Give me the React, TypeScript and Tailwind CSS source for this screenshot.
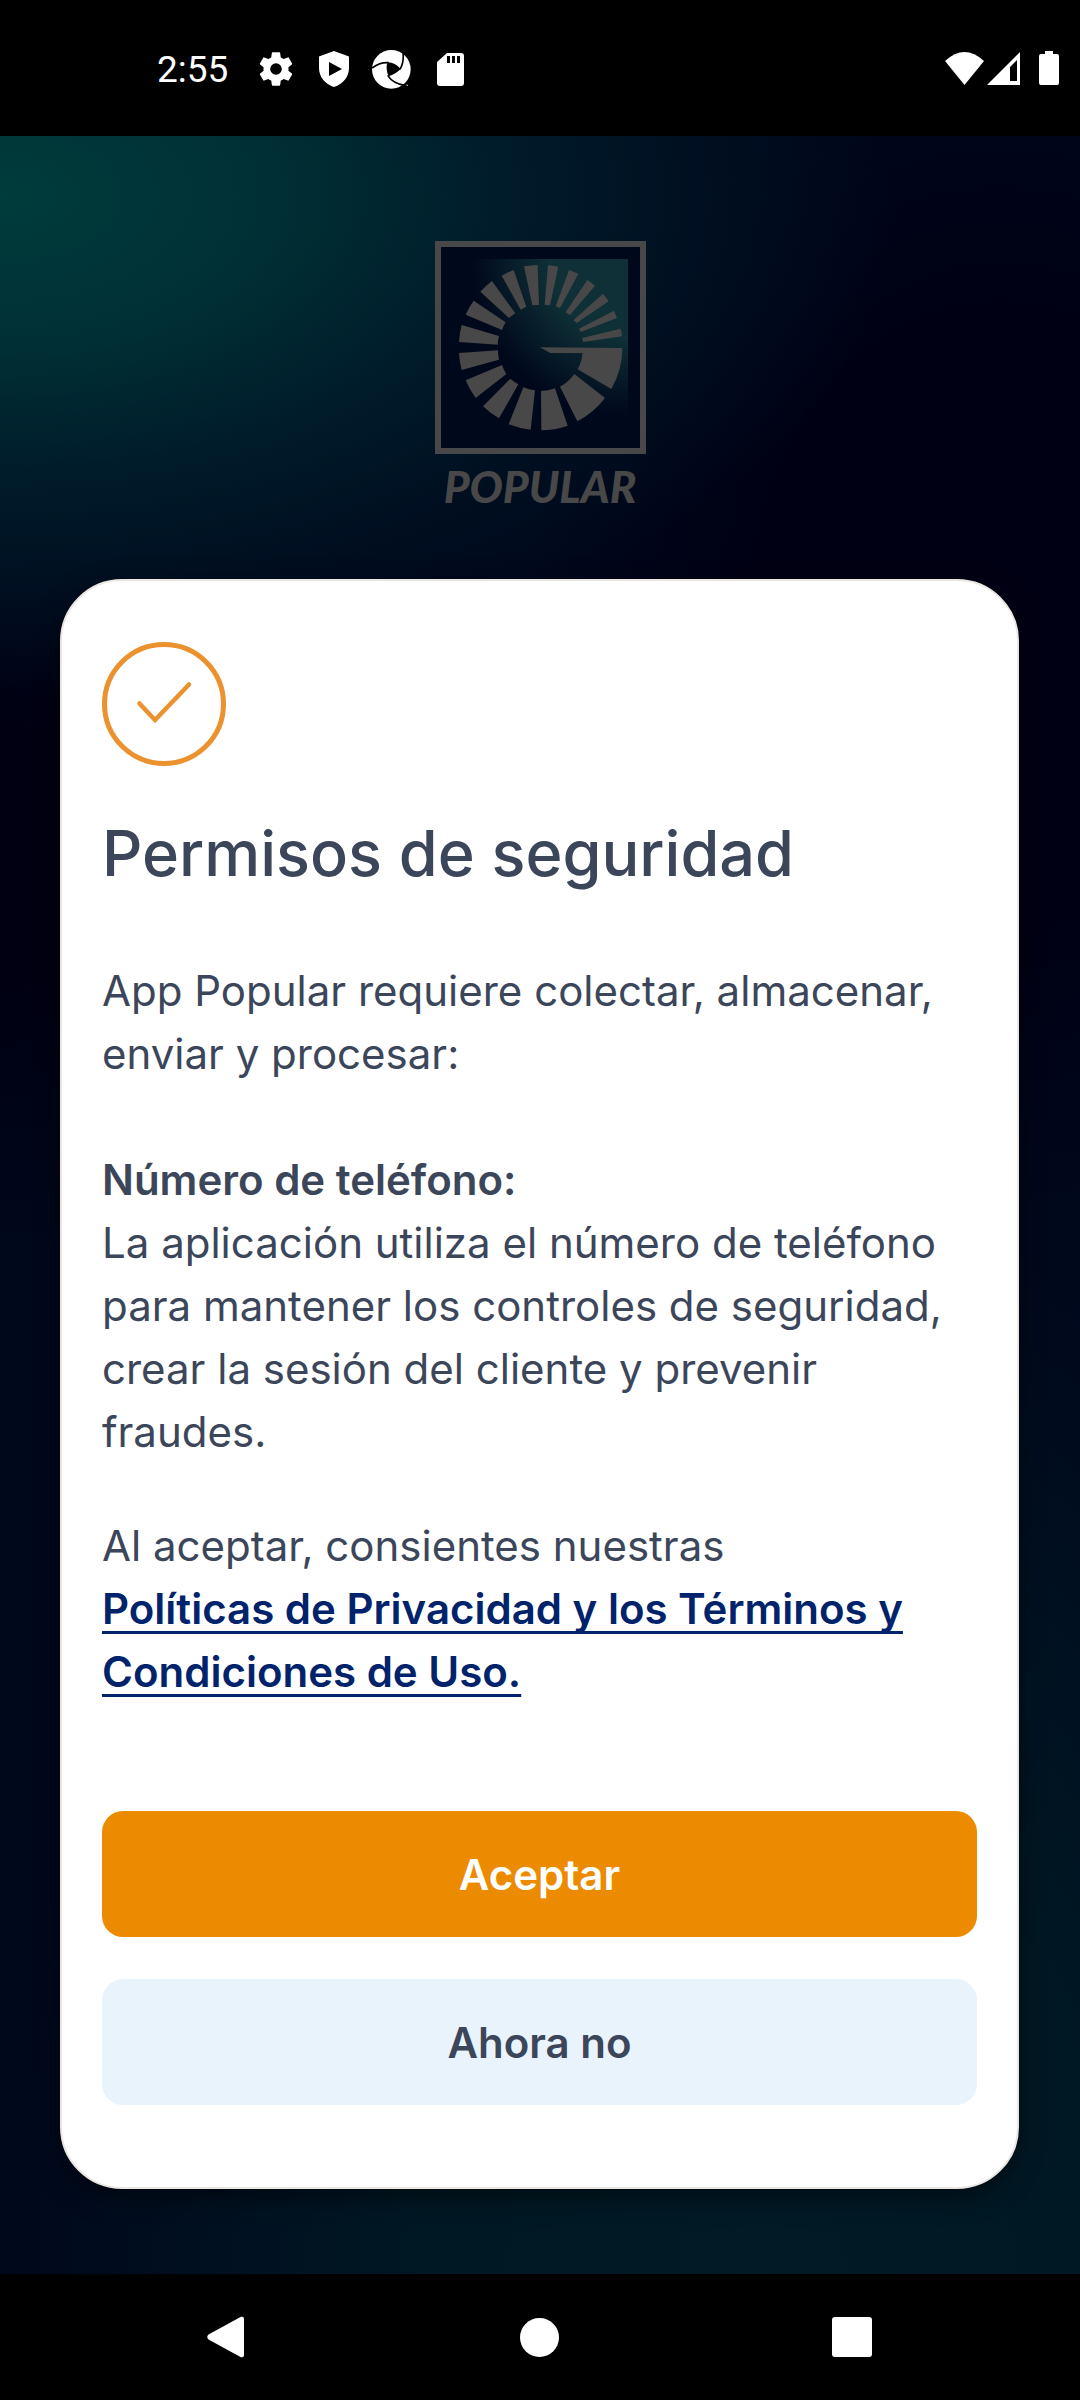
import React from "react";

const RAYS = [
  "M312 124A247 247 0 0 1 353 120L357 240A127 127 0 0 0 337 241Z",
  "M384 121A247 247 0 0 1 415 125L390 241A127 127 0 0 0 374 239Z",
  "M447 135A247 247 0 0 1 475 147L420 249A127 127 0 0 0 407 244Z",
  "M502 165A247 247 0 0 1 525 182L450 270A127 127 0 0 0 437 262Z",
  "M549 206A247 247 0 0 1 566 229L470 294A127 127 0 0 0 460 286Z",
  "M582 257A247 247 0 0 1 591 279L482 321A127 127 0 0 0 477 311Z",
  "M602 311A247 247 0 0 1 606 334L489 351A127 127 0 0 0 487 339Z",
  "M360 367L607 369A247 247 0 0 1 574 492L473 433A127 127 0 0 0 488 384L391 384Z",
  "M555 519A247 247 0 0 1 472 589L420 485A127 127 0 0 0 463 447Z",
  "M443 602A247 247 0 0 1 364 616L363 498A127 127 0 0 0 405 490Z",
  "M332 614A247 247 0 0 1 266 598L310 487A127 127 0 0 0 345 496Z",
  "M237 580A247 247 0 0 1 189 544L271 461A127 127 0 0 0 295 478Z",
  "M167 519A247 247 0 0 1 137 466L246 420A127 127 0 0 0 259 447Z",
  "M125 435A247 247 0 0 1 117 384L234 376A127 127 0 0 0 237 404Z",
  "M117 351A247 247 0 0 1 125 300L237 333A127 127 0 0 0 233 359Z",
  "M137 269A247 247 0 0 1 161 227L257 292A127 127 0 0 0 246 315Z",
  "M181 200A247 247 0 0 1 216 168L286 265A127 127 0 0 0 267 279Z",
  "M245 152A247 247 0 0 1 281 135L319 245A127 127 0 0 0 302 254Z",
];

function StatusBar() {
  return (
    <header className="flex h-[136px] shrink-0 items-center justify-between bg-black pr-[21px] pl-[157px] text-white">
      <div className="flex items-center gap-[23px] pt-0.5">
        <span className="mr-[5px] font-[Roboto] text-[37px] leading-none">2:55</span>
        <svg className="size-10" viewBox="0 0 24 24" fill="currentColor" aria-hidden="true">
          <path d="M19.43 12.98c.04-.32.07-.64.07-.98s-.03-.66-.07-.98l2.11-1.65c.19-.15.24-.42.12-.64l-2-3.46c-.12-.22-.39-.3-.61-.22l-2.49 1c-.52-.4-1.08-.73-1.69-.98l-.38-2.65A.49.49 0 0 0 14 2h-4c-.25 0-.46.18-.49.42l-.38 2.65c-.61.25-1.17.59-1.69.98l-2.49-1c-.23-.09-.49 0-.61.22l-2 3.46c-.13.22-.07.49.12.64l2.11 1.65c-.04.32-.07.65-.07.98s.03.66.07.98l-2.11 1.65c-.19.15-.24.42-.12.64l2 3.46c.12.22.39.3.61.22l2.49-1c.52.4 1.08.73 1.69.98l.38 2.65c.03.24.24.42.49.42h4c.25 0 .46-.18.49-.42l.38-2.65c.61-.25 1.17-.59 1.69-.98l2.49 1c.23.09.49 0 .61-.22l2-3.46c.12-.22.07-.49-.12-.64zM12 15.500a3.500 3.500 0 1 1 0-7 3.500 3.500 0 0 1 0 7z" />
        </svg>
        <svg className="h-9 w-[30px]" viewBox="0 0 30 36" fill="currentColor" aria-hidden="true">
          <path fillRule="evenodd" d="M15 0 30 5.500V17c0 9-6 16-15 19C6 33 0 26 0 17V5.500ZM10 11v14l13-7Z" />
        </svg>
        <svg className="size-[39px]" viewBox="0 0 117 117" aria-hidden="true">
          <circle cx="58" cy="58" r="58" fill="#fff" />
          <path fill="#000" d="M46 37Q68 36 86 57Q70 73 50 79Q40 58 46 37Z" />
          <path
            fill="none"
            stroke="#000"
            strokeWidth="5"
            d="M0 54Q24 36 50 38M92 2Q98 34 84 58M47 76Q62 100 100 107"
          />
          <path fill="#000" d="M80 117 100 106 117 104V117Z" />
          <path fill="#fff" d="M102 104h7l-3 4z" />
        </svg>
        <svg className="h-[33px] w-[33px]" viewBox="0 0 27 33" fill="currentColor" aria-hidden="true">
          <path fillRule="evenodd" d="M10 0H24a3 3 0 0 1 3 3V30a3 3 0 0 1-3 3H3a3 3 0 0 1-3-3V9ZM10 3v7h3V3Zm5 0v7h3V3Zm5 0v7h3V3Z" />
        </svg>
      </div>
      <div className="flex items-center">
        <svg className="h-[33px] w-[39px]" viewBox="0 0 39 33" fill="currentColor" aria-hidden="true">
          <path d="M0 9Q19.500-9 39 9L19.500 33Z" />
        </svg>
        <svg className="ml-[3px] h-[33px] w-[33px]" viewBox="0 0 33 33" fill="currentColor" aria-hidden="true">
          <path fillRule="evenodd" d="M33 0V33H0ZM30 8 23 15V29H30Z" />
        </svg>
        <svg className="ml-[19px] h-[34px] w-5" viewBox="0 0 20 34" fill="currentColor" aria-hidden="true">
          <path d="M6 0h8v3h4a2 2 0 0 1 2 2v27a2 2 0 0 1-2 2H2a2 2 0 0 1-2-2V5a2 2 0 0 1 2-2h4z" />
        </svg>
      </div>
    </header>
  );
}

function Logo() {
  return (
    <div className="flex flex-col items-center text-[#484848]">
      <svg className="h-[213px] w-[211px]" viewBox="45 48 633 639" role="img" aria-label="Popular">
        <defs>
          <radialGradient id="glow" gradientUnits="userSpaceOnUse" cx="624" cy="102" r="470">
            <stop offset="0.500" stopColor="#0e3036" />
            <stop offset="1" stopColor="#0e3036" stopOpacity="0" />
          </radialGradient>
        </defs>
        <rect x="54" y="57" width="615" height="621" fill="#00081c" stroke="currentColor" strokeWidth="18" />
        <rect x="150" y="102" width="474" height="474" fill="url(#glow)" />
        {RAYS.map((d) => (
          <path key={d} d={d} fill="currentColor" />
        ))}
      </svg>
      <span className="mt-2 font-[Lato] text-[44px] leading-[48px] font-black italic">POPULAR</span>
    </div>
  );
}

function PermissionCard() {
  return (
    <section
      role="dialog"
      aria-labelledby="title"
      className="mt-[69px] mr-[61px] ml-[60px] rounded-[62px] border-2 border-[#ebe6e0] bg-white px-10 pt-[60px] pb-[82px] text-[42px] leading-[63px] text-[#3c465a] shadow-[0_8px_24px_rgba(0,0,0,0.5)]"
    >
      <svg className="size-[126px]" viewBox="0 0 126 126" fill="none" stroke="#eb912d" aria-hidden="true">
        <circle cx="62" cy="63" r="59.500" strokeWidth="5" />
        <path d="M37.500 62.500 53 79 87 43.500" strokeWidth="4.500" strokeLinecap="round" />
      </svg>
      <h1 id="title" className="mt-[44px] text-[63px] leading-[84px] font-medium">
        Permisos de seguridad
      </h1>
      <p className="mt-16">App Popular requiere colectar, almacenar, enviar y procesar:</p>
      <h2 className="mt-[63px] font-semibold">Número de teléfono:</h2>
      <p>
        La aplicación utiliza el número de teléfono para mantener los controles de seguridad, crear la sesión del
        cliente y prevenir fraudes.
      </p>
      <p className="mt-[51px]">
        Al aceptar, consientes nuestras
        <br />
        <a
          href="#terminos"
          className="font-semibold text-[#00236b] underline decoration-[3px] underline-offset-[7px] [text-decoration-skip-ink:none]"
        >
          Políticas de Privacidad y los Términos y Condiciones de Uso.
        </a>
      </p>
      <div className="mt-[108px] flex flex-col gap-[42px] font-semibold">
        <button type="button" className="h-[126px] rounded-[21px] bg-[#ed8b00] text-white">
          Aceptar
        </button>
        <button type="button" className="h-[126px] rounded-[21px] bg-[#e8f3fc]">
          Ahora no
        </button>
      </div>
    </section>
  );
}

function NavigationBar() {
  return (
    <nav className="flex h-[126px] shrink-0 items-center justify-around bg-black pr-[72px] pl-[70px] text-white">
      <button type="button" aria-label="Atrás">
        <svg className="h-[42px] w-10" viewBox="0 0 40 42" fill="currentColor">
          <path d="M1.500 18.500 34 .8Q37 0 37 3V39Q37 42 34 41.200L1.500 23.500Q-1 21 1.500 18.500Z" />
        </svg>
      </button>
      <button type="button" aria-label="Inicio" className="size-[39px] rounded-full bg-white" />
      <button type="button" aria-label="Recientes" className="size-10 rounded-[3px] bg-white" />
    </nav>
  );
}

export default function App() {
  return (
    <div className="flex min-h-screen flex-col bg-black font-[Inter,sans-serif]">
      <StatusBar />
      <main className="flex-1 bg-[#00081c] bg-[radial-gradient(ellipse_900px_500px_at_0px_60px,#003c3c,#003036_30%,#001c2a_55%,#000e20_80%,transparent),radial-gradient(ellipse_480px_600px_at_1000px_480px,#000014,#000014_50%,transparent),radial-gradient(ellipse_300px_400px_at_0px_720px,#000012,#000012_30%,transparent),radial-gradient(ellipse_750px_1100px_at_760px_2140px,#001a26,#001824_45%,transparent)] pt-[105px]">
        <Logo />
        <PermissionCard />
      </main>
      <NavigationBar />
    </div>
  );
}
